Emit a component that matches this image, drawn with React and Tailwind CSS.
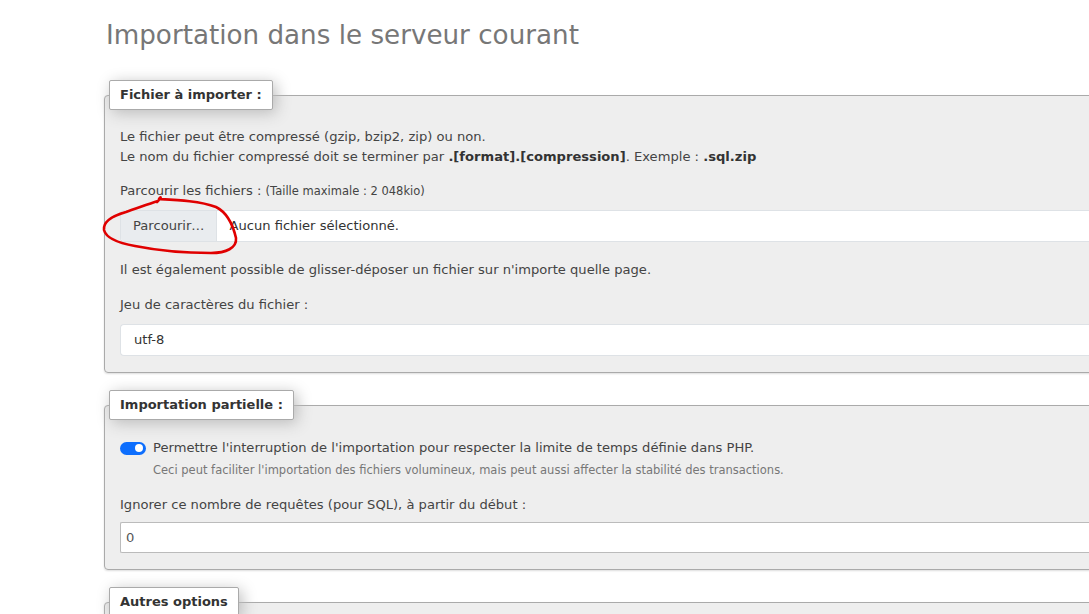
import React from "react";

function Section({ title, children, last }) {
  return (
    <fieldset
      className={`border border-[#aaa] rounded-[4px] bg-[#eee] pl-[4px] pr-0 ${
        last ? "pb-[40px]" : "pb-[16px] mb-[17px]"
      } shadow-[0_1px_2px_#ddd]`}
    >
      <legend className="bg-white border border-[#aaa] rounded-[2px] px-[10px] py-[5px] text-[13px] leading-[18px] font-bold text-[#333] shadow-[3px_3px_15px_#bbb]">
        {title}
      </legend>
      <div className="pl-[11px]">{children}</div>
    </fieldset>
  );
}

function Toggle() {
  return (
    <span className="inline-flex items-center justify-end w-[26px] h-[13px] rounded-full bg-[#0d6efd] pr-[3px] shrink-0">
      <span className="block w-[8px] h-[8px] rounded-full bg-white" />
    </span>
  );
}

export default function App() {
  return (
    <div
      className="w-full h-[614px] overflow-hidden bg-white text-[#444]"
      style={{ fontFamily: '"DejaVu Sans", sans-serif' }}
    >
      <div className="relative w-[1200px] pl-[104px] pt-[20px]">
        <h2 className="ml-[2px] text-[26.2px] leading-[31px] text-[#777] font-normal mb-[29px]">
          Importation dans le serveur courant
        </h2>

        <Section title="Fichier à importer :">
          <div className="pt-[16px] text-[13.1px] leading-[20px]">
            <p className="mt-[1px]">
              Le fichier peut être compressé (gzip, bzip2, zip) ou non.
            </p>
            <p>
              Le nom du fichier compressé doit se terminer par{" "}
              <b className="text-[#333]">.[format].[compression]</b>. Exemple :{" "}
              <b className="text-[#333]">.sql.zip</b>
            </p>
            <p className="mt-[14px]">
              Parcourir les fichiers :{" "}
              <span className="text-[11.5px]">(Taille maximale : 2 048kio)</span>
            </p>
            <div className="mt-[9px] flex h-[32px] bg-white border border-[#dee2e6] rounded-l-[4px] border-r-0 overflow-hidden">
              <div className="flex items-center px-[12px] bg-[#e9ecef] border-r border-[#dee2e6] text-[#444]">
                Parcourir…
              </div>
              <div className="flex items-center pl-[12px] text-[#333]">
                Aucun fichier sélectionné.
              </div>
            </div>
            <p className="mt-[18px]">
              Il est également possible de glisser-déposer un fichier sur
              n'importe quelle page.
            </p>
            <p className="mt-[15px]">Jeu de caractères du fichier :</p>
            <div className="mt-[9px] flex items-center h-[32px] bg-white border border-[#dee2e6] border-r-0 rounded-l-[4px] pl-[13px] text-[#333]">
              utf-8
            </div>
          </div>
        </Section>

        <Section title="Importation partielle :">
          <div className="pt-[18px] text-[13.1px] leading-[20px]">
            <div className="flex items-center gap-[7px]">
              <Toggle />
              <span>
                Permettre l'interruption de l'importation pour respecter la
                limite de temps définie dans PHP.
              </span>
            </div>
            <p className="pl-[33px] mt-[4px] text-[11.5px] leading-[17px] text-[#777]">
              Ceci peut faciliter l'importation des fichiers volumineux, mais
              peut aussi affecter la stabilité des transactions.
            </p>
            <p className="mt-[16px]">
              Ignorer ce nombre de requêtes (pour SQL), à partir du début :
            </p>
            <div className="mt-[7px] flex items-center h-[31px] bg-white border border-[#bbb] border-r-0 rounded-l-[2px] pl-[5px] text-[#555]">
              0
            </div>
          </div>
        </Section>

        <Section title="Autres options" last>
          <div className="h-[40px]" />
        </Section>

        {/* red hand-drawn circle around the browse button */}
        <svg
          className="absolute left-0 top-0 pointer-events-none"
          width="300"
          height="300"
          viewBox="0 0 300 300"
        >
          <path
            d="M157 202 C162 197 161 196 159 199 C178 200 200 201 216 207 C228 213 233 225 236 238 C237 248 226 253 211 253 C188 253 160 251 135 246 C118 243 106 238 104 230 C103 222 112 216 126 212 C138 208 148 204 158 201"
            fill="none"
            stroke="#e00000"
            strokeWidth="2.6"
            strokeLinecap="round"
            strokeLinejoin="round"
          />
        </svg>
      </div>
    </div>
  );
}
